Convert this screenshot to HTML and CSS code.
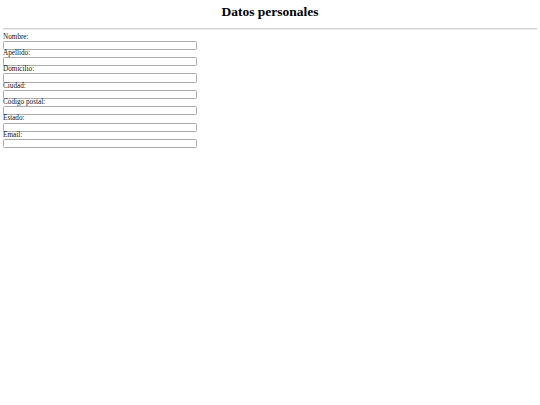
FILE: index.html
```html
<!DOCTYPE html>
<html lang="es">
<head>
<meta charset="utf-8">
<title>Datos personales</title>
<link rel="stylesheet" href="styles.css">
</head>
<body>
<h1 class="title">Datos personales</h1>
<hr class="rule">
<form class="form">
  <label class="label" for="nombre">Nombre:</label>
  <input class="field" id="nombre" type="text">
  <label class="label" for="apellido">Apellido:</label>
  <input class="field" id="apellido" type="text">
  <label class="label" for="domicilio">Domicilio:</label>
  <input class="field" id="domicilio" type="text">
  <label class="label" for="ciudad">Ciudad:</label>
  <input class="field" id="ciudad" type="text">
  <label class="label" for="cp">Codigo postal:</label>
  <input class="field" id="cp" type="text">
  <label class="label" for="estado">Estado:</label>
  <input class="field" id="estado" type="text">
  <label class="label" for="email">Email:</label>
  <input class="field" id="email" type="email">
</form>
</body>
</html>
```
FILE: styles.css
```css
html, body {
  background: #fff;
}
body {
  margin: 3px 3px 0 3px;
  font-family: "Liberation Serif", "Times New Roman", serif;
  color: #000;
}
.title {
  margin: 1px 0 0 0;
  font-size: 13.5px;
  line-height: 16px;
  font-weight: bold;
  text-align: center;
}
.rule {
  margin: 7.5px 0 4px 0;
  border: 0;
  border-top: 1px solid #d0d0d0;
  border-bottom: 1px solid #ececec;
  height: 0;
}
.form {
  display: flex;
  flex-direction: column;
  align-items: flex-start;
}
.label {
  display: block;
  font-size: 7.2px;
  line-height: 7.2px;
  height: 7.2px;
  color: #111;
}
.field {
  display: block;
  box-sizing: border-box;
  width: 194px;
  height: 9.2px;
  margin: 0;
  padding: 0;
  border: 1px solid #aaaaaa;
  border-radius: 1.5px;
  background: #fff;
}
```
